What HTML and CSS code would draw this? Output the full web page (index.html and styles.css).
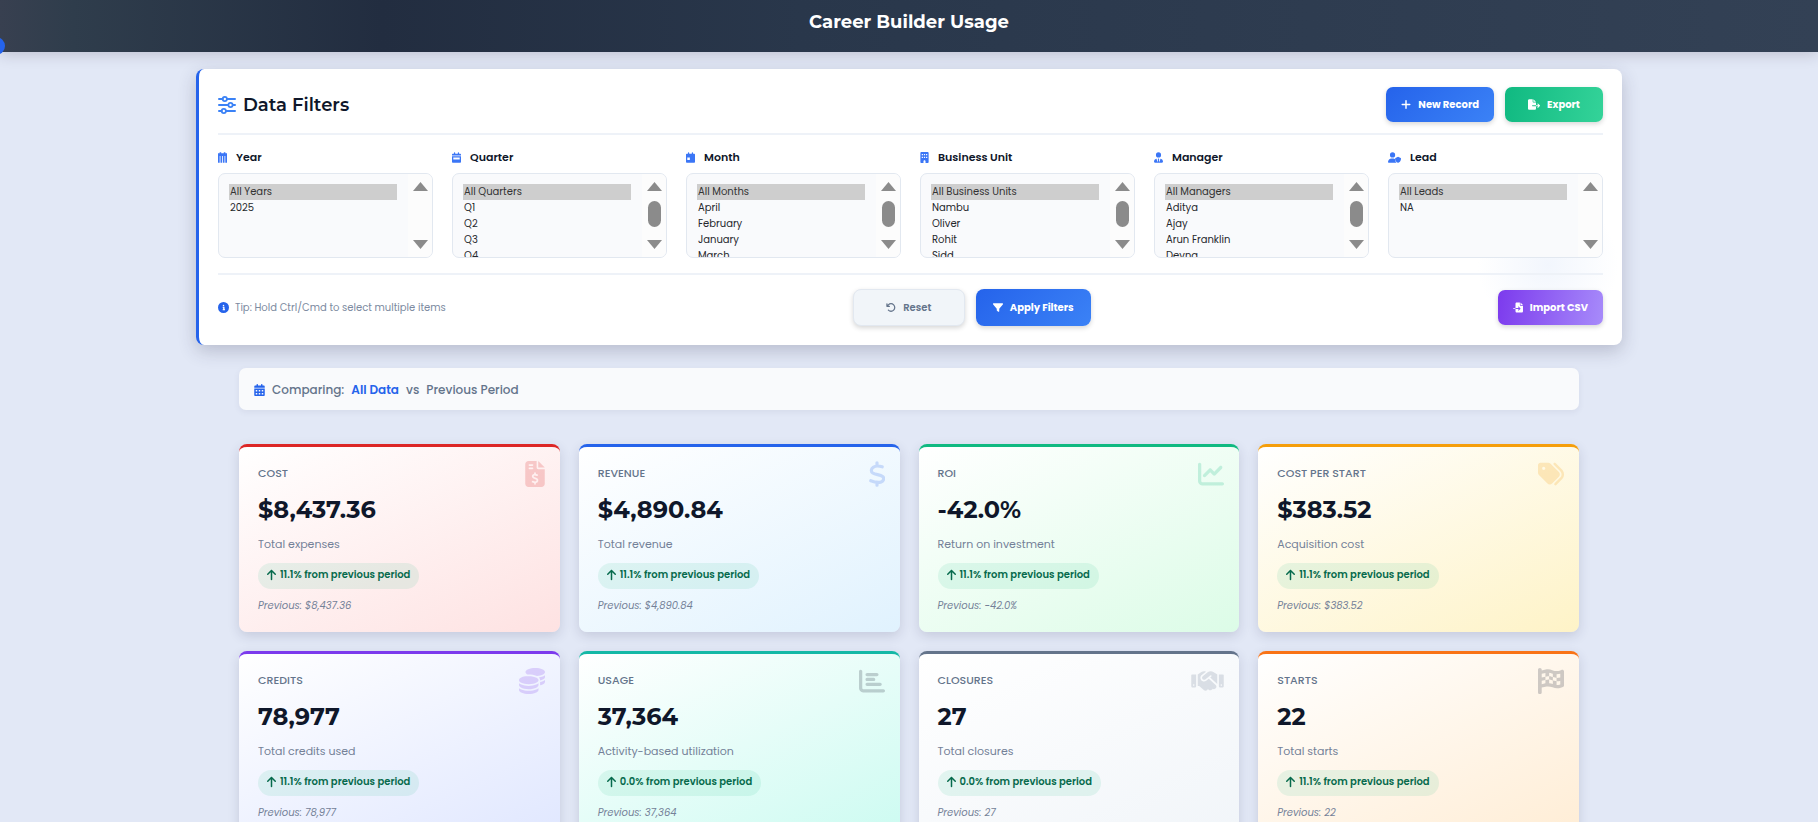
FILE: index.html
```html
<!DOCTYPE html>
<html lang="en">
<head>
<meta charset="utf-8">
<meta name="viewport" content="width=device-width, initial-scale=1">
<title>Career Builder Usage</title>
<link rel="stylesheet" href="styles.css">
</head>
<body>
<svg class="sprite" aria-hidden="true">
  <symbol id="sliders" viewBox="0 0 18 18"><g fill="none" stroke="currentColor" stroke-width="2" stroke-linecap="round"><path d="M1 3h3.600M9 3h8M1 9h9M15 9h2M1 15h2.600M8 15h9"/><g stroke-width="1.800"><circle cx="6.800" cy="3" r="2.100"/><circle cx="12.500" cy="9" r="2.100"/><circle cx="5.800" cy="15" r="2.100"/></g></g></symbol>
  <symbol id="plus" viewBox="0 0 448 512"><path fill="none" stroke="currentColor" stroke-width="68" stroke-linecap="round" d="M224 80v352M48 256h352"/></symbol>
  <symbol id="file-export" viewBox="0 0 576 512"><path d="M0 64C0 28.700 28.700 0 64 0h160v128c0 17.700 14.300 32 32 32h128v128H216c-13.300 0-24 10.700-24 24s10.700 24 24 24h168v112c0 35.300-28.700 64-64 64H64c-35.300 0-64-28.700-64-64zM384 336v-48h110l-39-39c-9.400-9.400-9.400-24.600 0-33.900s24.600-9.400 33.900 0l80 80c9.400 9.400 9.400 24.600 0 33.900l-80 80c-9.400 9.400-24.600 9.400-33.900 0s-9.400-24.600 0-33.900l39-39zm0-208H256V0z"/></symbol>
  <symbol id="file-import" viewBox="0 0 512 512"><path d="M128 64c0-35.300 28.700-64 64-64h160v128c0 17.700 14.300 32 32 32h128v288c0 35.300-28.700 64-64 64H192c-35.300 0-64-28.700-64-64V336h174l-39 39c-9.400 9.400-9.400 24.600 0 33.900s24.600 9.400 33.900 0l80-80c9.400-9.400 9.400-24.600 0-33.900l-80-80c-9.400-9.400-24.600-9.400-33.900 0s-9.400 24.600 0 33.900l39 39H128zm0 224v48H24c-13.300 0-24-10.700-24-24s10.700-24 24-24zM512 128H384V0z"/></symbol>
  <symbol id="calendar-days" viewBox="0 0 448 512"><path fill-rule="evenodd" d="M128 0c17.700 0 32 14.300 32 32v32h128V32c0-17.700 14.300-32 32-32s32 14.300 32 32v32h48c26.500 0 48 21.500 48 48v48H0v-48c0-26.500 21.500-48 48-48h48V32c0-17.700 14.300-32 32-32zM0 192h448v272c0 26.500-21.500 48-48 48H48c-26.500 0-48-21.500-48-48zm64 64v64h64v-64zm128 0v64h64v-64zm128 0v64h64v-64zM64 384v64h64v-64zm128 0v64h64v-64zm128 0v64h64v-64z"/></symbol>
  <symbol id="calendar-cols" viewBox="0 0 448 512"><path fill-rule="evenodd" d="M80 0h80v50h128V0h80v50h80v462H0V50h80zM84 180v332h40V180zm120 0v332h40V180zm120 0v332h40V180z"/></symbol>
  <symbol id="calendar-week" viewBox="0 0 448 512"><path fill-rule="evenodd" d="M128 0c17.700 0 32 14.300 32 32v32h128V32c0-17.700 14.300-32 32-32s32 14.300 32 32v32h48c26.500 0 48 21.500 48 48v48H0v-48c0-26.500 21.500-48 48-48h48V32c0-17.700 14.300-32 32-32zM0 192h448v272c0 26.500-21.500 48-48 48H48c-26.500 0-48-21.500-48-48zm64 64v96h320v-96z"/></symbol>
  <symbol id="calendar-day" viewBox="0 0 448 512"><path fill-rule="evenodd" d="M128 0c17.700 0 32 14.300 32 32v32h128V32c0-17.700 14.300-32 32-32s32 14.300 32 32v32h48c26.500 0 48 21.500 48 48v48H0v-48c0-26.500 21.500-48 48-48h48V32c0-17.700 14.300-32 32-32zM0 160h448v304c0 26.500-21.500 48-48 48H48c-26.500 0-48-21.500-48-48zm64 96v128h128V256z"/></symbol>
  <symbol id="building" viewBox="0 0 384 512"><path fill-rule="evenodd" d="M48 0h288c26.500 0 48 21.500 48 48v416c0 26.500-21.500 48-48 48h-96v-80c0-26.500-21.500-48-48-48s-48 21.500-48 48v80H48c-26.500 0-48-21.500-48-48V48C0 21.500 21.500 0 48 0zm16 96v56h56V96zm100 0v56h56V96zm100 0v56h56V96zM64 224v56h56v-56zm100 0v56h56v-56zm100 0v56h56v-56z"/></symbol>
  <symbol id="user-tie" viewBox="0 0 448 512"><path d="M224 256a128 128 0 1 0 0-256 128 128 0 1 0 0 256zm-15 48-20 34c-6 11 2 24 14 24h2l-36 134-39-160c-2-9-11-14-19-12C46 341 0 399 0 468c0 24 20 44 44 44h360c24 0 44-20 44-44 0-69-46-127-111-144-8-2-17 3-19 12l-39 160-36-134h2c12 0 20-13 14-24l-20-34z"/></symbol>
  <symbol id="user-shield" viewBox="0 0 640 512"><path d="M224 256a128 128 0 1 0 0-256 128 128 0 1 0 0 256zm-46 48C80 304 0 384 0 482c0 17 13 30 30 30h388c-48-33-66-96-66-145v-30c-28-21-60-33-82-33zM496 224l128 52c10 4 16 13 16 24 0 90-34 174-128 210-10 3-22 3-32 0-94-36-128-120-128-210 0-11 6-20 16-24z"/></symbol>
  <symbol id="info" viewBox="0 0 512 512"><path fill-rule="evenodd" d="M256 0a256 256 0 1 1 0 512 256 256 0 1 1 0-512zm-16 336h-24v48h112v-48h-24V224h-88v48h24zm16-208a36 36 0 1 0 0 72 36 36 0 1 0 0-72z"/></symbol>
  <symbol id="undo" viewBox="0 0 512 512"><path d="M125.700 160H176c17.700 0 32 14.300 32 32s-14.300 32-32 32H48c-17.700 0-32-14.300-32-32V64c0-17.700 14.300-32 32-32s32 14.300 32 32v51.200l17.600-17.600c87.500-87.500 229.300-87.500 316.800 0s87.500 229.300 0 316.800-229.300 87.500-316.800 0c-12.500-12.500-12.500-32.800 0-45.300s32.800-12.500 45.300 0c62.500 62.500 163.800 62.500 226.300 0s62.500-163.800 0-226.300-163.800-62.500-226.300 0z"/></symbol>
  <symbol id="filter" viewBox="0 0 512 512"><path d="M3.900 54.900C10.500 40.900 24.500 32 40 32h432c15.500 0 29.500 8.900 36.100 22.900s4.600 30.500-5.200 42.500L320 320.900V448c0 12.100-6.800 23.200-17.700 28.600s-23.800 4.300-33.500-3l-64-48c-8.100-6-12.800-15.500-12.800-25.600v-79.100L9 97.300C-.7 85.400-2.800 68.800 3.900 54.900z"/></symbol>
  <symbol id="arrow-up" viewBox="0 0 384 512"><path d="M214.600 41.400c-12.500-12.500-32.800-12.500-45.300 0l-160 160c-12.500 12.500-12.500 32.800 0 45.300s32.800 12.500 45.300 0L160 141.200V448c0 17.700 14.300 32 32 32s32-14.300 32-32V141.200l105.400 105.400c12.500 12.500 32.800 12.500 45.300 0s12.500-32.800 0-45.300z"/></symbol>
  <symbol id="dollar" viewBox="0 0 320 512"><path fill="none" stroke="currentColor" stroke-width="64" stroke-linecap="round" stroke-linejoin="round" d="M160 32v64M160 416v64M264 112c-66-20-134-24-178 8-46 32-52 86-10 116 52 34 146 34 196 70 38 30 24 90-28 108-66 22-148 0-208-24"/></symbol>
  <symbol id="invoice" viewBox="0 0 384 512"><path fill-rule="evenodd" d="M64 0h160v128c0 17.700 14.300 32 32 32h128v288c0 35.300-28.700 64-64 64H64c-35.300 0-64-28.700-64-64V64C0 28.700 28.700 0 64 0zm192 0 128 128H256zM80 64c-8.800 0-16 7.200-16 16s7.200 16 16 16h64c8.800 0 16-7.200 16-16s-7.200-16-16-16zm0 64c-8.800 0-16 7.200-16 16s7.200 16 16 16h64c8.800 0 16-7.200 16-16s-7.200-16-16-16z"/><path fill="none" stroke="#fff1f0" stroke-width="36" stroke-linecap="round" stroke-linejoin="round" d="M192 240v24M192 424v24M234 276c-28-8-58-14-76 2-18 18-10 42 10 52 24 12 46 12 62 26 20 20 8 54-20 62-22 6-44-2-64-10"/></symbol>
  <symbol id="chart-line" viewBox="0 0 512 512"><path d="M64 64c0-17.700-14.300-32-32-32S0 46.300 0 64v336c0 44.200 35.800 80 80 80h400c17.700 0 32-14.300 32-32s-14.300-32-32-32H80c-8.800 0-16-7.200-16-16zm406.600 86.600c12.500-12.500 12.500-32.800 0-45.300s-32.800-12.500-45.300 0L320 210.700l-57.400-57.400c-12.500-12.500-32.800-12.500-45.300 0l-112 112c-12.500 12.500-12.500 32.800 0 45.300s32.800 12.500 45.300 0l89.400-89.300 57.400 57.400c12.500 12.500 32.800 12.500 45.300 0z"/></symbol>
  <symbol id="tags" viewBox="0 0 512 512"><path d="M345 39.100l127.800 129.300c52.400 53 52.400 138.200 0 191.200l-112 113.300c-9.300 9.400-24.500 9.500-33.900.2s-9.500-24.500-.2-33.900l111.900-113.300c33.900-34.300 33.900-89.400 0-123.700L310.900 72.900c-9.300-9.400-9.200-24.600.2-33.900s24.600-9.200 33.900.2zM0 229.500V80c0-26.500 21.500-48 48-48h149.500c17 0 33.300 6.700 45.300 18.700l168 168c25 25 25 65.500 0 90.500L277.300 442.700c-25 25-65.500 25-90.500 0l-168-168C6.700 262.700 0 246.500 0 229.500zM144 144a32 32 0 1 0-64 0 32 32 0 1 0 64 0z"/></symbol>
  <symbol id="coins" viewBox="0 0 512 512"><path d="M512 80c0 18-14.300 34.600-38.400 48-29.100 16.100-72.500 27.500-122.300 30.900-3.700-1.800-7.400-3.500-11.300-5C300.600 137.400 248.200 128 192 128c-8.300 0-16.400.2-24.500.6l-1.100-.6C142.300 114.600 128 98 128 80c0-44.200 86-80 192-80s192 35.800 192 80zM160.700 161.100c10.200-.7 20.700-1.100 31.300-1.100 62.200 0 117.400 12.300 152.500 31.400C369.300 204.900 384 221.700 384 240c0 4-.7 7.900-2.100 11.700-4.600 13.200-17 25.300-35 35.500l-1.300.7c-35 19.400-90.800 32-153.600 32-59.600 0-112.900-11.300-148.200-29.100-1.900-.9-3.700-1.900-5.500-2.900C14.300 274.600 0 258 0 240c0-34.800 53.400-64.500 128-75.400 10.500-1.500 21.400-2.700 32.700-3.500zM416 240c0-21.900-10.600-39.900-24.100-53.400 28.300-4.400 54.200-11.400 76.200-20.500 16.300-6.800 31.500-15.200 43.900-25.500V176c0 19.300-16.500 37.100-43.800 50.900-14.600 7.400-32.400 13.700-52.400 18.500.1-1.800.2-3.500.2-5.300zm-32 96c0 18-14.300 34.600-38.400 48-1.800 1-3.600 1.900-5.500 2.900C304.900 404.700 251.600 416 192 416c-62.800 0-118.600-12.600-153.600-32C14.300 370.600 0 354 0 336v-35.400c12.500 10.300 27.600 18.700 43.900 25.500C83.400 342.600 135.800 352 192 352s108.600-9.400 148.100-25.900c7.800-3.200 15.300-6.900 22.400-10.900 6.100-3.400 11.800-7.200 17.200-11.200 1.500-1.100 2.900-2.300 4.300-3.400zm32 0v-57.900c19-4.200 36.500-9.500 52.100-16 16.300-6.800 31.500-15.200 43.900-25.500V272c0 10.500-5 21-14.900 30.900-16.300 16.300-45 29.700-81.300 38.400.1-1.700.2-3.500.2-5.300zM192 448c56.200 0 108.600-9.400 148.100-25.900 16.300-6.800 31.500-15.200 43.900-25.500V432c0 44.200-86 80-192 80S0 476.200 0 432v-35.400c12.500 10.300 27.600 18.700 43.900 25.500C83.400 438.600 135.800 448 192 448z"/></symbol>
  <symbol id="chart-bar" viewBox="0 0 512 512"><path d="M32 32c17.700 0 32 14.300 32 32v336c0 8.800 7.200 16 16 16h400c17.700 0 32 14.300 32 32s-14.300 32-32 32H80c-44.200 0-80-35.800-80-80V64c0-17.700 14.300-32 32-32zm96 96c0-17.700 14.300-32 32-32h192c17.700 0 32 14.300 32 32s-14.300 32-32 32H160c-17.700 0-32-14.300-32-32zm32 64h128c17.700 0 32 14.300 32 32s-14.300 32-32 32H160c-17.700 0-32-14.300-32-32s14.300-32 32-32zm0 96h256c17.700 0 32 14.300 32 32s-14.300 32-32 32H160c-17.700 0-32-14.300-32-32s14.300-32 32-32z"/></symbol>
  <symbol id="handshake" viewBox="0 0 640 512"><path d="M323.400 85.200l-96.800 78.400c-16.100 13-19.200 36.400-7 53.100 12.900 17.800 38 21.300 55.300 7.800l99.300-77.200c7-5.400 17-4.200 22.500 2.800s4.200 17-2.800 22.500L373 188.800l139 128V128h-.7l-3.900-2.500L434.800 79c-15.300-9.800-33.200-15-51.400-15-21.800 0-43 7.500-60 21.200zm22.800 124.400l-51.700 40.200C263 274.300 217.300 268 193.700 235.600c-22.200-30.500-16.600-73.100 12.700-96.800l83.200-67.300c-11.600-4.900-24.100-7.400-36.800-7.400C234 64 215.700 69.600 200 80l-72 48v224h28.200l91.400 83.400c19.600 17.900 49.900 16.500 67.800-3.100 5.500-6.100 9.200-13.200 11.100-20.600l17 15.600c19.500 17.900 49.900 16.600 67.800-2.900 4.500-4.900 7.800-10.600 9.900-16.500 19.400 13 45.800 10.300 62.100-7.500 17.900-19.500 16.600-49.900-2.900-67.800zM16 128c-8.800 0-16 7.200-16 16v208c0 17.700 14.300 32 32 32h32c17.700 0 32-14.300 32-32V128zm32 192a16 16 0 1 1 0 32 16 16 0 1 1 0-32zm496-192v224c0 17.700 14.300 32 32 32h32c17.700 0 32-14.300 32-32V144c0-8.800-7.200-16-16-16zm32 208a16 16 0 1 1 32 0 16 16 0 1 1-32 0z"/></symbol>
  <symbol id="flag" viewBox="0 0 448 512" preserveAspectRatio="none"><path fill-rule="evenodd" d="M32 0C49.700 0 64 14.300 64 32v16l69-17.200c38.100-9.500 78.300-5.100 113.500 12.500 46.300 23.200 100.800 23.200 147.100 0l9.600-4.800C423.800 28.100 448 43.100 448 66.100v279.700c0 13.300-8.300 25.300-20.800 30l-34.700 13c-46.200 17.300-97.600 14.600-141.700-7.400-37.900-19-81.300-23.700-122.500-13.400L64 384v96c0 17.700-14.300 32-32 32s-32-14.300-32-32V32C0 14.300 14.300 0 32 0zm32 187.100V114l64-16v75.200zm64-13.900l25.300-5.500c12.700-2.800 25.700-4 38.700-3.600V91.700c8.900 1.800 17.600 4.700 25.800 8.800 12.400 6.200 25.200 11.200 38.200 15v62l-23.600-6.900c-13.200-3.800-26.800-6-40.400-6.400v64c-8.400-.4-16.800.3-25.100 2.100L128 238.700v63.800c-5.100.9-10.100 2-15.200 3.300L64 318v-65.400l64-13.900zm64 55c7.500.4 15 1.700 22.300 3.800l41.700 12.300v69.700c-20.700-7.700-42.200-12.500-64-14.400zm64-50.700l40.800 12c7.600 2.200 15.400 3.700 23.200 4.500v64.300c-14-1-27.800-3.400-41.300-7.400l-22.700-6.700zM320 194v-69.500c21.600 0 43.100-3 64-9.100v70.900l-22.300 5.200c-13.700 3.100-27.800 4-41.700 2.500zm0 64.300c18.800 1.200 37.700-.2 56.100-4.500l7.900-1.800v71.700l-14 5.200c-16.100 6.100-33.200 8.300-50 6.800z"/></symbol>
  <symbol id="up" viewBox="0 0 15 9"><path d="M7.500 0 15 9H0z"/></symbol>
  <symbol id="down" viewBox="0 0 15 9"><path d="M0 0h15L7.500 9z"/></symbol>
</svg>

<header class="topbar">
  <h1>Career Builder Usage</h1>
  <button class="side-toggle" type="button" aria-label="Open menu"></button>
</header>

<section class="filters">
  <div class="filters-head">
    <h2><svg><use href="#sliders"/></svg>Data Filters</h2>
    <div class="actions">
      <button class="btn blue" type="button"><svg><use href="#plus"/></svg>New Record</button>
      <button class="btn green" type="button"><svg class="wide"><use href="#file-export"/></svg>Export</button>
    </div>
  </div>
  <div class="fields">
    <div class="field"><label for="year"><svg><use href="#calendar-cols"/></svg>Year</label>
      <div class="listbox"><select id="year" multiple><option selected>All Years</option><option>2025</option></select><div class="bar" aria-hidden="true"><svg><use href="#up"/></svg><svg><use href="#down"/></svg></div></div></div>
    <div class="field"><label for="quarter"><svg><use href="#calendar-week"/></svg>Quarter</label>
      <div class="listbox"><select id="quarter" multiple><option selected>All Quarters</option><option>Q1</option><option>Q2</option><option>Q3</option><option>Q4</option></select><div class="bar" aria-hidden="true"><svg><use href="#up"/></svg><i class="thumb"></i><svg><use href="#down"/></svg></div></div></div>
    <div class="field"><label for="month"><svg><use href="#calendar-day"/></svg>Month</label>
      <div class="listbox"><select id="month" multiple><option selected>All Months</option><option>April</option><option>February</option><option>January</option><option>March</option></select><div class="bar" aria-hidden="true"><svg><use href="#up"/></svg><i class="thumb"></i><svg><use href="#down"/></svg></div></div></div>
    <div class="field"><label for="unit"><svg><use href="#building"/></svg>Business Unit</label>
      <div class="listbox"><select id="unit" multiple><option selected>All Business Units</option><option>Nambu</option><option>Oliver</option><option>Rohit</option><option>Sidd</option></select><div class="bar" aria-hidden="true"><svg><use href="#up"/></svg><i class="thumb"></i><svg><use href="#down"/></svg></div></div></div>
    <div class="field"><label for="manager"><svg><use href="#user-tie"/></svg>Manager</label>
      <div class="listbox"><select id="manager" multiple><option selected>All Managers</option><option>Aditya</option><option>Ajay</option><option>Arun Franklin</option><option>Devna</option></select><div class="bar" aria-hidden="true"><svg><use href="#up"/></svg><i class="thumb"></i><svg><use href="#down"/></svg></div></div></div>
    <div class="field"><label for="lead"><svg class="wide"><use href="#user-shield"/></svg>Lead</label>
      <div class="listbox"><select id="lead" multiple><option selected>All Leads</option><option>NA</option></select><div class="bar" aria-hidden="true"><svg><use href="#up"/></svg><svg><use href="#down"/></svg></div></div></div>
  </div>
  <div class="filters-foot">
    <p class="tip"><svg><use href="#info"/></svg>Tip: Hold Ctrl/Cmd to select multiple items</p>
    <div class="actions">
      <button class="btn tall reset" type="reset"><svg><use href="#undo"/></svg>Reset</button>
      <button class="btn tall blue apply" type="submit"><svg><use href="#filter"/></svg>Apply Filters</button>
    </div>
    <button class="btn purple" type="button"><svg><use href="#file-import"/></svg>Import CSV</button>
  </div>
</section>

<main class="content">
  <div class="compare"><svg><use href="#calendar-days"/></svg><span>Comparing:</span><strong>All Data</strong><span>vs</span><span>Previous Period</span></div>
  <div class="cards">
    <article class="card cost"><svg class="mark"><use href="#invoice"/></svg><h3>Cost</h3><p class="value">$8,437.36</p><p class="note">Total expenses</p><p class="trend"><svg><use href="#arrow-up"/></svg>11.1% from previous period</p><p class="prev">Previous: $8,437.36</p></article>
    <article class="card revenue"><svg class="mark"><use href="#dollar"/></svg><h3>Revenue</h3><p class="value">$4,890.84</p><p class="note">Total revenue</p><p class="trend"><svg><use href="#arrow-up"/></svg>11.1% from previous period</p><p class="prev">Previous: $4,890.84</p></article>
    <article class="card roi"><svg class="mark"><use href="#chart-line"/></svg><h3>ROI</h3><p class="value">-42.0%</p><p class="note">Return on investment</p><p class="trend"><svg><use href="#arrow-up"/></svg>11.1% from previous period</p><p class="prev">Previous: -42.0%</p></article>
    <article class="card start-cost"><svg class="mark"><use href="#tags"/></svg><h3>Cost per start</h3><p class="value">$383.52</p><p class="note">Acquisition cost</p><p class="trend"><svg><use href="#arrow-up"/></svg>11.1% from previous period</p><p class="prev">Previous: $383.52</p></article>
    <article class="card credits"><svg class="mark"><use href="#coins"/></svg><h3>Credits</h3><p class="value">78,977</p><p class="note">Total credits used</p><p class="trend"><svg><use href="#arrow-up"/></svg>11.1% from previous period</p><p class="prev">Previous: 78,977</p></article>
    <article class="card usage"><svg class="mark"><use href="#chart-bar"/></svg><h3>Usage</h3><p class="value">37,364</p><p class="note">Activity-based utilization</p><p class="trend"><svg><use href="#arrow-up"/></svg>0.0% from previous period</p><p class="prev">Previous: 37,364</p></article>
    <article class="card closures"><svg class="mark"><use href="#handshake"/></svg><h3>Closures</h3><p class="value">27</p><p class="note">Total closures</p><p class="trend"><svg><use href="#arrow-up"/></svg>0.0% from previous period</p><p class="prev">Previous: 27</p></article>
    <article class="card starts"><svg class="mark"><use href="#flag"/></svg><h3>Starts</h3><p class="value">22</p><p class="note">Total starts</p><p class="trend"><svg><use href="#arrow-up"/></svg>11.1% from previous period</p><p class="prev">Previous: 22</p></article>
  </div>
</main>
</body>
</html>
```
FILE: styles.css
```css
* { box-sizing: border-box; }
body { margin: 0; background: #e2e8f6; color: #0f172a; font-family: Poppins, Inter, "Liberation Sans", sans-serif; font-size: 12px; line-height: 16px; }
h1, h2, h3, p { margin: 0; }
svg { fill: currentColor; flex: none; }
.sprite { position: absolute; width: 0; height: 0; }

.topbar { position: relative; display: flex; justify-content: center; padding: 10px 16px 18px; background: linear-gradient(90deg, #384050 0, #2f3d4c 4%, #222d40 21%, #29374b 44%, #334155 100%); box-shadow: 0 2px 14px rgba(40, 30, 50, .2); }
.topbar h1 { color: #fff; font: 700 18px/24px Montserrat, Inter, sans-serif; }
.side-toggle { position: absolute; left: -13px; top: 37px; width: 18px; height: 18px; padding: 0; border: 0; border-radius: 50%; background: #2563eb; }

.filters { max-width: 1426px; margin: 17px auto 0; padding: 18px 19px 19px; border-left: 3px solid #2563eb; border-radius: 8px; background: radial-gradient(circle at calc(100% - 74px) 196px, #f2f6fd, rgba(255, 255, 255, 0) 70px), #fff; box-shadow: 0 6px 18px rgba(50, 50, 80, .24); }
.filters-head { display: flex; align-items: center; justify-content: space-between; padding-bottom: 11px; border-bottom: 2px solid #eef2f8; }
h2 { display: flex; align-items: center; gap: 7px; font: 600 18px/24px Montserrat, Inter, sans-serif; }
h2 svg { width: 18px; height: 18px; color: #3b82f6; }
.actions { display: flex; gap: 11px; }
.btn { display: flex; align-items: center; justify-content: center; gap: 7px; min-width: 98px; height: 35px; padding: 0 15px; border: 0; border-radius: 7px; color: #fff; font: 700 10px/16px Poppins, Inter, sans-serif; box-shadow: 0 2px 5px rgba(0, 0, 0, .16); }
.btn svg { width: 10px; height: 11px; }
.btn svg.wide { width: 12px; }
.blue { background: linear-gradient(135deg, #2563eb, #3b82f6); }
.green { background: linear-gradient(100deg, #10b981, #34d399); }
.purple { background: linear-gradient(100deg, #7c3aed, #a78bfa); }
.tall { height: 37px; border-radius: 8px; }
.reset { min-width: 112px; border: 1px solid #e2e8f0; background: #f1f5f9; color: #64748b; font-weight: 600; }
.apply { min-width: 115px; }

.fields { display: grid; grid-template-columns: repeat(6, 1fr); gap: 19px; padding: 14px 0 15px; border-bottom: 2px solid #eef2f8; }
.field label { display: flex; align-items: center; gap: 9px; margin-bottom: 8px; font-size: 11px; font-weight: 600; }
.field label svg { width: 9px; height: 11px; color: #3b76f6; }
.field label svg.wide { width: 13px; }
.listbox { display: flex; height: 85px; border: 1px solid #e2e8f0; border-radius: 7px; background: #f9fafc; overflow: hidden; }
select { flex: 1; min-width: 0; height: 100%; padding: 10px 11px 0 10px; border: 0; border-radius: 0; background: transparent; color: #26282c; font: 400 10px/16px Poppins, Inter, sans-serif; scrollbar-width: none; outline: 0; }
option { min-height: 16px; padding: 0 1px; line-height: 16px; }
option:checked { background: linear-gradient(#cecece, #cecece); color: #333; }
.bar { display: flex; flex-direction: column; align-items: center; width: 24px; padding: 8px 0; background: #fcfcfc; color: #8b8b8b; }
.bar svg { width: 15px; height: 9px; }
.bar svg:last-child { margin-top: auto; }
.thumb { width: 13px; height: 26px; margin-top: 10px; border-radius: 7px; background: #8b8b8b; }

.filters-foot { display: flex; align-items: center; justify-content: space-between; padding-top: 14px; }
.tip { display: flex; align-items: center; gap: 6px; color: #7c8aa0; font-size: 10px; }
.tip svg { width: 11px; height: 11px; color: #2563eb; }

.content { max-width: 1340px; margin: 23px auto 20px; }
.compare { display: flex; align-items: center; gap: 7px; padding: 13px 15px 11px; border-radius: 7px; background: #f9fafc; color: #64748b; font-size: 12px; font-weight: 500; line-height: 18px; box-shadow: 0 2px 6px rgba(60, 60, 100, .08); }
.compare svg { width: 11px; height: 12px; color: #2563eb; }
.compare strong { color: #2563eb; font-weight: 600; }

.cards { display: grid; grid-template-columns: repeat(4, 1fr); gap: 19px; margin-top: 34px; }
.card { position: relative; display: flex; flex-direction: column; align-items: flex-start; padding: 18px 19px; border-top: 3px solid var(--line); border-radius: 8px; background: linear-gradient(155deg, #fff, var(--tint)); box-shadow: 0 4px 12px rgba(50, 50, 90, .16); }
.mark { position: absolute; top: 14px; right: 15px; width: 26px; height: 26px; color: var(--mark, var(--line)); opacity: .2; }
.card h3 { color: #64748b; font-size: 11px; font-weight: 500; line-height: 16px; text-transform: uppercase; }
.value { margin-top: 13px; font: 700 24px/32px Montserrat, Inter, sans-serif; }
.note { margin-top: 10px; color: #748198; font-size: 11px; }
.trend { display: flex; align-items: center; gap: 4px; margin-top: 11px; padding: 4px 9px 6px; border-radius: 13px; background: rgba(16, 185, 129, .1); color: #066a4c; font-size: 10px; font-weight: 600; }
.trend svg { width: 9px; height: 12px; }
.prev { margin-top: 9px; color: #748198; font-size: 10px; font-style: italic; }
.cost { --line: #dc2626; --tint: #fee2e2; }
.cost .mark { width: 20px; }
.revenue { --line: #2563eb; --tint: #e0f2fe; }
.revenue .mark { width: 16px; }
.roi { --line: #10b981; --tint: #dcfce7; }
.start-cost { --line: #f59e0b; --tint: #fef3c7; }
.credits { --line: #7c3aed; --tint: #e0e7ff; }
.usage { --line: #14b8a6; --tint: #ccfbf1; --mark: #0f172a; }
.closures { --line: #64748b; --tint: #f1f5f9; }
.closures .mark { width: 33px; }
.starts { --line: #f97316; --tint: #ffedd5; --mark: #0f172a; }
```
